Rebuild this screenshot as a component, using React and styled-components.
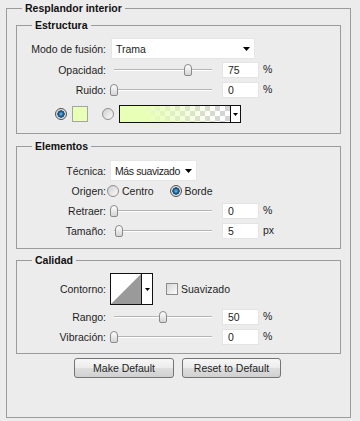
import React from 'react'
import styled, { createGlobalStyle } from 'styled-components'

const GlobalStyle = createGlobalStyle`
  html, body {
    margin: 0;
    padding: 0;
    background: #ececec;
  }
  body {
    font-family: "Liberation Sans", Arial, sans-serif;
    font-size: 10.5px;
    color: #1e1e1e;
  }
`;

const Panel = styled.div`
  width: 360px;
  height: 421px;
  box-sizing: border-box;
  padding: 2px 0 0 6px;
  background: #ececec;
  overflow: hidden;
`;

const Group = styled.fieldset`
  margin: ${p => p.$mt || 0}px 0 0 0;
  padding: 0;
  min-width: 0;
  width: ${p => (p.$w ? `${p.$w}px` : 'auto')};
  box-sizing: border-box;
  border: 1px solid #9b9b9b;
`;

const Legend = styled.legend`
  margin-left: 15px;
  padding: 0 3px;
  font-weight: bold;
  line-height: 13px;
  height: 13px;
  color: #111;
`;

const GroupBody = styled.div`
  padding: ${p => p.$pad};
`;

const Row = styled.div`
  display: flex;
  align-items: center;
  height: ${p => p.$h}px;
  margin-top: ${p => p.$mt || 0}px;
`;

const Label = styled.span`
  flex: 0 0 89px;
  text-align: right;
  margin-right: ${p => (p.$mr === undefined ? 4 : p.$mr)}px;
  white-space: nowrap;
`;

const Select = styled.div`
  display: flex;
  align-items: center;
  justify-content: space-between;
  box-sizing: border-box;
  width: ${p => p.$w}px;
  height: 21px;
  margin-left: ${p => p.$ml || 0}px;
  padding: 0 4px 0 4px;
  background: #fff;
  border: 1px solid #e6e6e6;
  white-space: nowrap;
`;

const SelectText = styled.span`
  letter-spacing: ${p => p.$ls || 0}px;
`;

const Caret = ({ w = 7, h = 4 }) => (
  <svg width={w} height={h} viewBox={`0 0 ${w} ${h}`} style={{ display: 'block', flex: 'none' }}>
    <polygon points={`0,0 ${w},0 ${w / 2},${h}`} fill="#000" />
  </svg>
);

const Slider = styled.div`
  position: relative;
  flex: 0 0 106px;
  height: 14px;
  &::before {
    content: '';
    position: absolute;
    left: 4px;
    right: 4px;
    top: 6px;
    height: 1px;
    background: #b4b4b4;
    border-bottom: 1px solid #fff;
  }
`;

const Thumb = styled.span`
  position: absolute;
  top: 1px;
  width: 8px;
  height: 12px;
  box-sizing: border-box;
  border: 1px solid #8a8a8a;
  border-radius: 4px 4px 2px 2px;
  background: linear-gradient(#fefefe, #d4d4d4);
`;

const NumberBox = styled.div`
  box-sizing: border-box;
  width: 37px;
  height: 16px;
  margin-left: 6px;
  padding-left: 5px;
  line-height: 14px;
  background: #fff;
  border: 1px solid #e4e4e4;
`;

const Unit = styled.span`
  margin-left: 4px;
  margin-top: -3px;
`;

const Radio = styled.span`
  flex: none;
  display: inline-block;
  width: 12px;
  height: 12px;
  box-sizing: border-box;
  border-radius: 50%;
  margin-left: ${p => p.$ml || 0}px;
  border: 1px solid ${p => (p.$on ? '#505050' : '#8e8e8e')};
  background: ${p =>
    p.$on
      ? 'radial-gradient(circle at 50% 50%, #86c0ea 0, #2b74ad 1.8px, #0f3f66 3.4px, #dcdcdc 3.9px, #fafafa 100%)'
      : 'linear-gradient(135deg, #cfcfcf, #fbfbfb)'};
`;

const RadioText = styled.span`
  margin-left: 3px;
`;

const Swatch = styled.span`
  flex: none;
  width: 16px;
  height: 16px;
  box-sizing: border-box;
  margin-left: 5px;
  border: 1px solid #a4a4a4;
  background: #e8ffb6;
`;

const GradientPicker = styled.div`
  flex: none;
  display: flex;
  width: 122px;
  height: 18px;
  box-sizing: border-box;
  margin-left: 5px;
  border: 1px solid #111;
`;

const GradientFill = styled.div`
  flex: 1;
  background:
    linear-gradient(to right, #e8ffb6 0%, #e8ffb6 22%, rgba(232, 255, 182, 0) 92%),
    repeating-conic-gradient(#d4d4d4 0% 25%, #ffffff 0% 50%) 0 0 / 10px 10px;
`;

const PickerArrow = styled.div`
  flex: 0 0 9px;
  display: flex;
  align-items: center;
  justify-content: center;
  border-left: 1px solid #111;
  background: #fff;
`;

const ContourPicker = styled.div`
  flex: none;
  display: flex;
  width: 43px;
  height: 32px;
  box-sizing: border-box;
  border: 1px solid #111;
  background: #fff;
`;

const ContourArrow = styled.div`
  flex: 1;
  display: flex;
  align-items: center;
  justify-content: center;
  border-left: 1px solid #111;
`;

const Checkbox = styled.span`
  flex: none;
  width: 12px;
  height: 12px;
  box-sizing: border-box;
  margin-left: 13px;
  border: 1px solid #8c8c8c;
  background: linear-gradient(135deg, #d6d6d6, #fcfcfc);
`;

const CheckText = styled.span`
  margin-left: 3px;
`;

const ButtonRow = styled.div`
  display: flex;
  justify-content: center;
  gap: 8px;
  margin-top: 4px;
  padding-right: 2px;
`;

const Button = styled.button`
  width: ${p => p.$w}px;
  height: 20px;
  padding: 0;
  font-family: inherit;
  font-size: 10.5px;
  color: #1e1e1e;
  border: 1px solid #747474;
  border-radius: 3px;
  background: linear-gradient(#f7f7f7 0%, #ececec 48%, #dedede 52%, #d0d0d0 100%);
`;

const SliderRow = ({ label, value, unit, pct, mt }) => (
  <Row $h={20} $mt={mt}>
    <Label>{label}</Label>
    <Slider>
      <Thumb style={{ left: `${Math.round(pct * 98)}px` }} />
    </Slider>
    <NumberBox>{value}</NumberBox>
    <Unit>{unit}</Unit>
  </Row>
);

export default function App() {
  return (
    <>
      <GlobalStyle />
      <Panel>
        <Group $w={345}>
          <Legend>Resplandor interior</Legend>
          <GroupBody $pad="4px 9px 39px 9px">
            <Group>
              <Legend>Estructura</Legend>
              <GroupBody $pad="6px 0 10px 0">
                <Row $h={21}>
                  <Label>Modo de fusión:</Label>
                  <Select $w={144} $ml={1}>
                    <SelectText>Trama</SelectText>
                    <Caret />
                  </Select>
                </Row>
                <SliderRow label="Opacidad:" value="75" unit="%" pct={0.75} mt={1} />
                <SliderRow label="Ruido:" value="0" unit="%" pct={0} />
                <Row $h={18} $mt={5}>
                  <Radio $on $ml={38} />
                  <Swatch />
                  <Radio $ml={14} />
                  <GradientPicker>
                    <GradientFill />
                    <PickerArrow>
                      <Caret w={5} h={3} />
                    </PickerArrow>
                  </GradientPicker>
                </Row>
              </GroupBody>
            </Group>

            <Group $mt={6}>
              <Legend>Elementos</Legend>
              <GroupBody $pad="7px 0 7px 0">
                <Row $h={21}>
                  <Label>Técnica:</Label>
                  <Select $w={87}>
                    <SelectText $ls={-0.4}>Más suavizado</SelectText>
                    <Caret />
                  </Select>
                </Row>
                <Row $h={20}>
                  <Label $mr={1}>Origen:</Label>
                  <Radio />
                  <RadioText>Centro</RadioText>
                  <Radio $on $ml={16} />
                  <RadioText>Borde</RadioText>
                </Row>
                <SliderRow label="Retraer:" value="0" unit="%" pct={0} />
                <SliderRow label="Tamaño:" value="5" unit="px" pct={0.05} />
              </GroupBody>
            </Group>

            <Group $mt={5}>
              <Legend>Calidad</Legend>
              <GroupBody $pad="6px 0 6px 0">
                <Row $h={32}>
                  <Label>Contorno:</Label>
                  <ContourPicker>
                    <svg width="30" height="30" viewBox="0 0 30 30" style={{ display: 'block' }}>
                      <rect width="30" height="30" fill="#fff" />
                      <polygon points="0,30 30,0 30,30" fill="#9a9a9a" />
                    </svg>
                    <ContourArrow>
                      <Caret w={5} h={3} />
                    </ContourArrow>
                  </ContourPicker>
                  <Checkbox />
                  <CheckText>Suavizado</CheckText>
                </Row>
                <SliderRow label="Rango:" value="50" unit="%" pct={0.5} mt={2} />
                <SliderRow label="Vibración:" value="0" unit="%" pct={0} />
              </GroupBody>
            </Group>

            <ButtonRow>
              <Button $w={100}>Make Default</Button>
              <Button $w={99}>Reset to Default</Button>
            </ButtonRow>
          </GroupBody>
        </Group>
      </Panel>
    </>
  );
}
